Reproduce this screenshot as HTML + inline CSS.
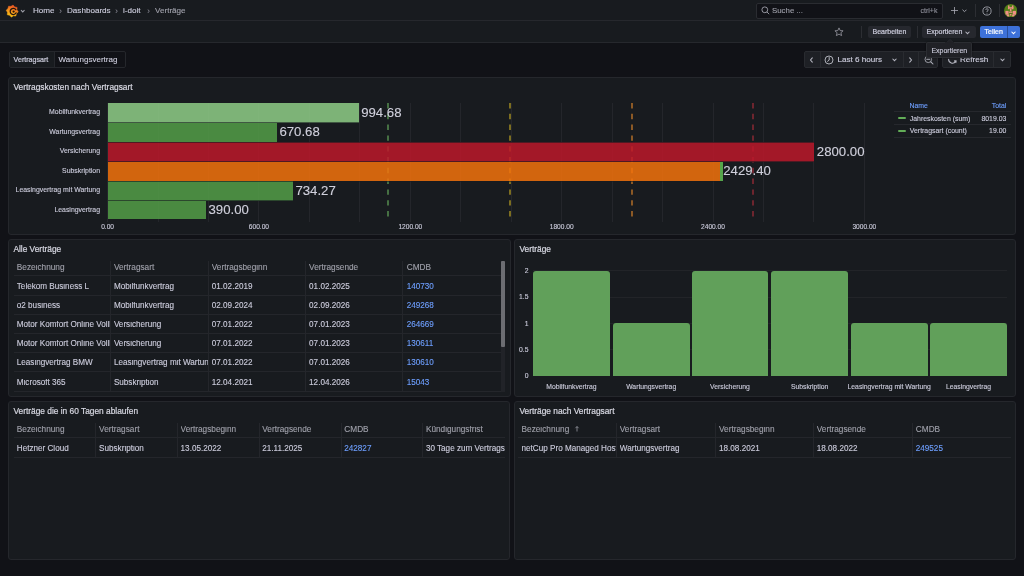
<!DOCTYPE html>
<html><head><meta charset="utf-8">
<style>
*{box-sizing:border-box;margin:0;padding:0}
html,body{width:1024px;height:576px;overflow:hidden;background:#111217;font-family:"Liberation Sans",sans-serif;color:#ccccdc}
#root{position:absolute;left:0;top:0;width:1024px;height:576px;will-change:transform}
.a{position:absolute}
.t{position:absolute;white-space:nowrap;line-height:1;-webkit-text-stroke:0.12px currentColor}
.bar1{left:0;top:0;width:1024px;height:21px;background:#181b1f;border-bottom:1px solid #26282d}
.bar2{left:0;top:21px;width:1024px;height:22px;background:#181b1f;border-bottom:1px solid #26282d}
.panel{position:absolute;background:#181b1f;border:1px solid #25272c;border-radius:3px;overflow:hidden}
.ptitle{position:absolute;left:4.4px;top:5.1px;font-size:8.35px;white-space:nowrap;line-height:1;color:#d8d9e3;-webkit-text-stroke:0.2px #d8d9e3}
.btn{position:absolute;border-radius:2px;background:#26282e;font-size:7px;white-space:nowrap;line-height:1}
.crumb{-webkit-text-stroke:0.12px currentColor;position:absolute;top:6.7px;font-size:8.1px;line-height:1;white-space:nowrap;color:#ccccdc}
.chev{position:absolute;top:6.5px;font-size:9px;line-height:1;color:#8e8e99}
</style></head>
<body><div id="root">
<!-- top nav -->
<div class="a bar1"></div>
<div class="a bar2"></div>

<!-- grafana logo -->
<svg class="a" style="left:5px;top:3.5px" width="14" height="14" viewBox="0 0 14 14">
  <defs><linearGradient id="lg" x1="0" y1="1" x2="0.3" y2="0"><stop offset="0" stop-color="#f9c80e"/><stop offset="0.45" stop-color="#f6a31a"/><stop offset="1" stop-color="#ef5a24"/></linearGradient></defs>
  <polygon fill="url(#lg)" stroke="url(#lg)" stroke-width="0.5" stroke-linejoin="round" points="8.05,1.06 9.69,2.88 12.07,3.43 11.94,5.87 13.24,7.95 11.42,9.59 10.87,11.97 8.43,11.84 6.35,13.14 4.71,11.32 2.33,10.77 2.46,8.33 1.16,6.25 2.98,4.61 3.53,2.23 5.97,2.36"/>
  <path d="M10.84,5.72 A3.1,3.1 0 1 0 11.11,8.81" fill="none" stroke="#24160e" stroke-width="1.25" stroke-linecap="round"/>
  <circle cx="8.60" cy="7.60" r="1.15" fill="#24160e"/>
</svg>
<svg class="a" style="left:20px;top:8.5px" width="5.5" height="4.5" viewBox="0 0 5.5 4.5"><path d="M1,1.2 L2.75,3 L4.5,1.2" fill="none" stroke="#9d9ea8" stroke-width="1.1"/></svg>

<div class="crumb" style="left:33px">Home</div>
<div class="chev" style="left:59px">›</div>
<div class="crumb" style="left:67px">Dashboards</div>
<div class="chev" style="left:115px">›</div>
<div class="crumb" style="left:123px">i-doit</div>
<div class="chev" style="left:147px">›</div>
<div class="crumb" style="left:155px;color:#a0a1ab">Verträge</div>

<!-- search -->
<div class="a" style="left:756px;top:2.5px;width:187px;height:16px;background:#111217;border:1px solid #2a2c31;border-radius:2px"></div>
<svg class="a" style="left:760.5px;top:6px" width="9" height="9" viewBox="0 0 9 9"><circle cx="3.8" cy="3.8" r="2.9" fill="none" stroke="#a0a1ab" stroke-width="0.9"/><path d="M6,6 L8.2,8.2" stroke="#a0a1ab" stroke-width="0.9"/></svg>
<div class="t" style="left:772px;top:6.5px;font-size:7.85px;color:#9d9ea8">Suche ...</div>
<div class="t" style="left:920.5px;top:6.9px;font-size:7px;color:#8e8f99">ctrl+k</div>
<svg class="a" style="left:950px;top:6px" width="9" height="9" viewBox="0 0 9 9"><path d="M4.5,1 V8 M1,4.5 H8" stroke="#a9aab4" stroke-width="0.8"/></svg>
<svg class="a" style="left:962px;top:9px" width="5" height="4" viewBox="0 0 5 4"><path d="M0.8,1 L2.5,2.7 L4.2,1" fill="none" stroke="#9d9ea8" stroke-width="1" stroke-linecap="round"/></svg>
<div class="a" style="left:974.6px;top:4px;width:1px;height:12.5px;background:#2c2e33"></div>
<svg class="a" style="left:982px;top:5.5px" width="10" height="10" viewBox="0 0 10 10"><circle cx="5" cy="5" r="4.1" fill="none" stroke="#a5a6b0" stroke-width="0.85"/><path d="M3.8,4 A1.2,1.2 0 1 1 5,5.1 V6.1" fill="none" stroke="#a5a6b0" stroke-width="0.8"/><circle cx="5" cy="7.3" r="0.45" fill="#a5a6b0"/></svg>
<div class="a" style="left:999px;top:4px;width:1px;height:12.5px;background:#2c2e33"></div>
<svg class="a" style="left:1003.8px;top:3.8px" width="13.4" height="13.4" viewBox="0 0 14 14">
  <defs><clipPath id="avc"><circle cx="7" cy="7" r="7"/></clipPath></defs>
  <g clip-path="url(#avc)"><rect width="14" height="14" fill="#537f17"/>
  <g fill="#ef8f85">
   <rect x="4.2" y="1.5" width="1.5" height="4"/><rect x="8.3" y="1.5" width="1.5" height="4"/><rect x="4.2" y="3.3" width="5.6" height="1.4"/>
   <rect x="6.2" y="4.7" width="1.6" height="3"/>
   <rect x="1.5" y="7.2" width="3.3" height="4"/><rect x="9.2" y="7.2" width="3.3" height="4"/><rect x="5.2" y="8" width="3.6" height="1.2"/>
   <rect x="3" y="11" width="2.5" height="2"/><rect x="8.5" y="11" width="2.5" height="2"/><rect x="6.2" y="10.5" width="1.6" height="1.6"/>
  </g></g>
</svg>

<!-- second bar -->
<svg class="a" style="left:834px;top:26.6px" width="10" height="10" viewBox="0 0 10 10"><path d="M5,0.9 L6.2,3.6 L9.1,3.8 L6.9,5.7 L7.6,8.6 L5,7.1 L2.4,8.6 L3.1,5.7 L0.9,3.8 L3.8,3.6 Z" fill="none" stroke="#9a9ba5" stroke-width="0.8" stroke-linejoin="round"/></svg>
<div class="a" style="left:861px;top:26px;width:1px;height:12px;background:#2c2e33"></div>
<div class="btn" style="left:868px;top:25.7px;width:43px;height:12.6px"></div>
<div class="t" style="left:872.5px;top:28.1px;font-size:7px;color:#ccccdc;-webkit-text-stroke:0.2px #ccccdc">Bearbeiten</div>
<div class="a" style="left:917px;top:26px;width:1px;height:12px;background:#2c2e33"></div>
<div class="btn" style="left:922px;top:25.7px;width:54px;height:12.6px"></div>
<div class="t" style="left:926.5px;top:28.1px;font-size:7px;color:#ccccdc;-webkit-text-stroke:0.2px #ccccdc">Exportieren</div>
<svg class="a" style="left:965px;top:30.5px" width="5" height="4" viewBox="0 0 5 4"><path d="M0.8,1 L2.5,2.7 L4.2,1" fill="none" stroke="#b5b6c0" stroke-width="1.05" stroke-linecap="round"/></svg>
<div class="a" style="left:980px;top:25.7px;width:40px;height:12.6px;background:#3d71d9;border-radius:2px"></div>
<div class="a" style="left:1007px;top:25.7px;width:1px;height:12.6px;background:#2a4f9a"></div>
<div class="t" style="left:984.5px;top:28.1px;font-size:7px;color:#ffffff;-webkit-text-stroke:0.2px #fff">Teilen</div>
<svg class="a" style="left:1011px;top:30.5px" width="5" height="4" viewBox="0 0 5 4"><path d="M0.8,1 L2.5,2.7 L4.2,1" fill="none" stroke="#ffffff" stroke-width="1.05" stroke-linecap="round"/></svg>

<!-- variable -->
<div class="a" style="left:9px;top:51px;width:117px;height:17px;border:1px solid #25272c;border-radius:2px;background:#111217"></div>
<div class="a" style="left:10px;top:52px;width:45px;height:15px;background:#181b1f;border-right:1px solid #25272c"></div>
<div class="t" style="left:13.6px;top:56.6px;font-size:7.1px;color:#ccccdc;-webkit-text-stroke:0.2px #ccccdc">Vertragsart</div>
<div class="t" style="left:58.5px;top:55.5px;font-size:8.0px;color:#ccccdc">Wartungsvertrag</div>

<!-- time picker -->
<div class="a" style="left:804px;top:51px;width:134px;height:17px;background:#1e2025;border:1px solid #292b30;border-radius:2px"></div>
<div class="a" style="left:819.5px;top:51px;width:1px;height:17px;background:#292b30"></div>
<div class="a" style="left:902.8px;top:51px;width:1px;height:17px;background:#292b30"></div>
<div class="a" style="left:917.7px;top:51px;width:1px;height:17px;background:#292b30"></div>
<svg class="a" style="left:809px;top:57px" width="5" height="6" viewBox="0 0 5 6"><path d="M3.3,0.8 L1.5,3 L3.3,5.2" fill="none" stroke="#b5b6c0" stroke-width="1.05" stroke-linecap="round"/></svg>
<svg class="a" style="left:824px;top:55px" width="10" height="10" viewBox="0 0 10 10"><circle cx="5" cy="5" r="4" fill="none" stroke="#c5c6d0" stroke-width="0.85"/><path d="M5.2,2.5 V5.1 L3.6,6.3" fill="none" stroke="#c5c6d0" stroke-width="0.9" stroke-linecap="round"/></svg>
<div class="t" style="left:837.5px;top:56.2px;font-size:8.1px;color:#ccccdc;-webkit-text-stroke:0.15px #ccccdc">Last 6 hours</div>
<svg class="a" style="left:891.5px;top:58px" width="5" height="4" viewBox="0 0 5 4"><path d="M0.8,1 L2.5,2.7 L4.2,1" fill="none" stroke="#b5b6c0" stroke-width="1.05" stroke-linecap="round"/></svg>
<svg class="a" style="left:908.3px;top:57px" width="5" height="6" viewBox="0 0 5 6"><path d="M1.7,0.8 L3.5,3 L1.7,5.2" fill="none" stroke="#b5b6c0" stroke-width="1.05" stroke-linecap="round"/></svg>
<svg class="a" style="left:923.5px;top:55px" width="10" height="10" viewBox="0 0 10 10"><circle cx="4.3" cy="4.3" r="3.3" fill="none" stroke="#b5b6c0" stroke-width="0.8"/><path d="M2.8,4.3 H5.8 M6.8,6.8 L9,9" stroke="#b5b6c0" stroke-width="1.05" stroke-linecap="round"/></svg>
<div class="a" style="left:942px;top:51px;width:69px;height:17px;background:#1e2025;border:1px solid #292b30;border-radius:2px"></div>
<div class="a" style="left:993px;top:51px;width:1px;height:17px;background:#292b30"></div>
<svg class="a" style="left:946.5px;top:55px" width="11" height="10" viewBox="0 0 11 10"><path d="M1.6,4.2 A3.9,3.9 0 0 0 8.6,6.6" fill="none" stroke="#b5b6c0" stroke-width="1.05" stroke-linecap="round"/><path d="M7,5.8 L9.3,5.6 L9.1,7.8 Z" fill="#b5b6c0" stroke="#b5b6c0" stroke-width="0.6" stroke-linejoin="round"/><path d="M2.3,2.2 A3.9,3.9 0 0 1 8.6,2.4" fill="none" stroke="#b5b6c0" stroke-width="0.9" stroke-linecap="round"/></svg>
<div class="t" style="left:960px;top:56.2px;font-size:8.1px;color:#ccccdc;-webkit-text-stroke:0.15px #ccccdc">Refresh</div>
<svg class="a" style="left:1000px;top:58px" width="5" height="4" viewBox="0 0 5 4"><path d="M0.8,1 L2.5,2.7 L4.2,1" fill="none" stroke="#b5b6c0" stroke-width="1.05" stroke-linecap="round"/></svg>

<!-- tooltip -->
<div class="a" style="left:926.4px;top:42px;width:45.4px;height:15.7px;background:#202126;border:1px solid #2b2d32;border-radius:2px;box-shadow:0 0 2px rgba(0,0,0,0.5)"></div>
<svg class="a" style="left:945.6px;top:38.8px" width="8" height="4.2" viewBox="0 0 8 4.2"><path d="M0,4.2 L4,0.4 L8,4.2" fill="#202126" stroke="#2b2d32" stroke-width="0.8"/></svg>
<div class="a" style="left:945.2px;top:42.3px;width:8.8px;height:1.2px;background:#202126"></div>
<div class="t" style="left:931.4px;top:46.6px;font-size:7px;color:#ccccdc">Exportieren</div>
<!-- panels -->
<div class="panel" style="left:8px;top:77px;width:1008px;height:158px"><div class="ptitle">Vertragskosten nach Vertragsart</div></div>
<div class="panel" style="left:8px;top:239px;width:502.5px;height:158px"><div class="ptitle">Alle Verträge</div></div>
<div class="panel" style="left:514px;top:239px;width:502px;height:158px"><div class="ptitle">Verträge</div></div>
<div class="panel" style="left:8px;top:401px;width:501.9px;height:158.5px"><div class="ptitle">Verträge die in 60 Tagen ablaufen</div></div>
<div class="panel" style="left:514px;top:401px;width:502px;height:158.5px"><div class="ptitle">Verträge nach Vertragsart</div></div>
<div class="a" style="left:107.10px;top:103px;width:1px;height:118.5px;background:#24262b"></div>
<div class="a" style="left:157.55px;top:103px;width:1px;height:118.5px;background:#24262b"></div>
<div class="a" style="left:208.00px;top:103px;width:1px;height:118.5px;background:#24262b"></div>
<div class="a" style="left:258.45px;top:103px;width:1px;height:118.5px;background:#24262b"></div>
<div class="a" style="left:308.90px;top:103px;width:1px;height:118.5px;background:#24262b"></div>
<div class="a" style="left:359.35px;top:103px;width:1px;height:118.5px;background:#24262b"></div>
<div class="a" style="left:409.80px;top:103px;width:1px;height:118.5px;background:#24262b"></div>
<div class="a" style="left:460.25px;top:103px;width:1px;height:118.5px;background:#24262b"></div>
<div class="a" style="left:510.70px;top:103px;width:1px;height:118.5px;background:#24262b"></div>
<div class="a" style="left:561.15px;top:103px;width:1px;height:118.5px;background:#24262b"></div>
<div class="a" style="left:611.60px;top:103px;width:1px;height:118.5px;background:#24262b"></div>
<div class="a" style="left:662.05px;top:103px;width:1px;height:118.5px;background:#24262b"></div>
<div class="a" style="left:712.50px;top:103px;width:1px;height:118.5px;background:#24262b"></div>
<div class="a" style="left:762.95px;top:103px;width:1px;height:118.5px;background:#24262b"></div>
<div class="a" style="left:813.40px;top:103px;width:1px;height:118.5px;background:#24262b"></div>
<div class="a" style="left:863.85px;top:103px;width:1px;height:118.5px;background:#24262b"></div>
<svg class="a" style="left:387.2px;top:103px" width="2" height="114"><line x1="1" y1="0" x2="1" y2="114" stroke="#5f9e58" stroke-width="1.3" stroke-dasharray="5.4 5.4"/></svg>
<svg class="a" style="left:509px;top:103px" width="2" height="114"><line x1="1" y1="0" x2="1" y2="114" stroke="#b39b22" stroke-width="1.3" stroke-dasharray="5.4 5.4"/></svg>
<svg class="a" style="left:630.6px;top:103px" width="2" height="114"><line x1="1" y1="0" x2="1" y2="114" stroke="#c87a2a" stroke-width="1.3" stroke-dasharray="5.4 5.4"/></svg>
<svg class="a" style="left:751.6px;top:103px" width="2" height="114"><line x1="1" y1="0" x2="1" y2="114" stroke="#9c2b38" stroke-width="1.3" stroke-dasharray="5.4 5.4"/></svg>
<div class="a" style="left:107.6px;top:103.10px;width:251.06px;height:19.5px;background:rgba(143,206,135,0.85)"></div>
<div class="t" style="right:924px;top:109.05px;font-size:6.9px;color:#ccccdc;text-align:right">Mobilfunkvertrag</div>
<div class="t" style="left:361.16px;top:105.75px;font-size:13.2px;color:#d0d0dc">994.68</div>
<div class="a" style="left:107.6px;top:122.60px;width:169.28px;height:19.5px;background:rgba(83,158,72,0.85)"></div>
<div class="t" style="right:924px;top:128.55px;font-size:6.9px;color:#ccccdc;text-align:right">Wartungsvertrag</div>
<div class="t" style="left:279.38px;top:125.25px;font-size:13.2px;color:#d0d0dc">670.68</div>
<div class="a" style="left:107.6px;top:142.10px;width:706.72px;height:19.5px;background:rgba(188,23,42,0.85)"></div>
<div class="t" style="right:924px;top:148.05px;font-size:6.9px;color:#ccccdc;text-align:right">Versicherung</div>
<div class="t" style="left:816.82px;top:144.75px;font-size:13.2px;color:#d0d0dc">2800.00</div>
<div class="a" style="left:107.6px;top:161.60px;width:613.18px;height:19.5px;background:rgba(243,114,12,0.85)"></div>
<div class="t" style="right:924px;top:167.55px;font-size:6.9px;color:#ccccdc;text-align:right">Subskription</div>
<div class="t" style="left:723.28px;top:164.25px;font-size:13.2px;color:#d0d0dc">2429.40</div>
<div class="a" style="left:107.6px;top:181.10px;width:185.33px;height:19.5px;background:rgba(83,158,72,0.85)"></div>
<div class="t" style="right:924px;top:187.05px;font-size:6.9px;color:#ccccdc;text-align:right">Leasingvertrag mit Wartung</div>
<div class="t" style="left:295.43px;top:183.75px;font-size:13.2px;color:#d0d0dc">734.27</div>
<div class="a" style="left:107.6px;top:200.60px;width:98.44px;height:18.9px;background:rgba(83,158,72,0.85)"></div>
<div class="t" style="right:924px;top:206.55px;font-size:6.9px;color:#ccccdc;text-align:right">Leasingvertrag</div>
<div class="t" style="left:208.54px;top:203.25px;font-size:13.2px;color:#d0d0dc">390.00</div>
<div class="a" style="left:107.6px;top:122.10px;width:251.06px;height:1px;background:rgba(24,27,31,0.6)"></div>
<div class="a" style="left:107.6px;top:141.60px;width:706.72px;height:1px;background:rgba(24,27,31,0.6)"></div>
<div class="a" style="left:107.6px;top:161.10px;width:706.72px;height:1px;background:rgba(24,27,31,0.6)"></div>
<div class="a" style="left:107.6px;top:180.60px;width:613.18px;height:1px;background:rgba(24,27,31,0.6)"></div>
<div class="a" style="left:107.6px;top:200.10px;width:185.33px;height:1px;background:rgba(24,27,31,0.6)"></div>
<div class="a" style="left:720.2px;top:161.60px;width:2.8px;height:19.3px;background:#56a64b"></div>
<div class="t" style="left:77.60px;width:60px;text-align:center;top:223.5px;font-size:6.6px;color:#ccccdc">0.00</div>
<div class="t" style="left:228.95px;width:60px;text-align:center;top:223.5px;font-size:6.6px;color:#ccccdc">600.00</div>
<div class="t" style="left:380.30px;width:60px;text-align:center;top:223.5px;font-size:6.6px;color:#ccccdc">1200.00</div>
<div class="t" style="left:531.65px;width:60px;text-align:center;top:223.5px;font-size:6.6px;color:#ccccdc">1800.00</div>
<div class="t" style="left:683.00px;width:60px;text-align:center;top:223.5px;font-size:6.6px;color:#ccccdc">2400.00</div>
<div class="t" style="left:834.35px;width:60px;text-align:center;top:223.5px;font-size:6.6px;color:#ccccdc">3000.00</div>
<div class="t" style="left:909.5px;top:102.6px;font-size:6.9px;color:#6e9fff">Name</div>
<div class="t" style="right:17.7px;top:102.6px;font-size:6.9px;color:#6e9fff;text-align:right">Total</div>
<div class="a" style="left:894px;top:110.9px;width:117px;height:1px;background:#26282d"></div>
<div class="a" style="left:894px;top:123.7px;width:117px;height:1px;background:#26282d"></div>
<div class="a" style="left:894px;top:137.0px;width:117px;height:1px;background:#26282d"></div>
<div class="a" style="left:898px;top:117.40px;width:7.6px;height:1.6px;border-radius:1px;background:#62ad57"></div>
<div class="t" style="left:909.8px;top:115.50px;font-size:6.9px;color:#ccccdc">Jahreskosten (sum)</div>
<div class="t" style="right:17.7px;top:115.50px;font-size:6.9px;color:#ccccdc;text-align:right">8019.03</div>
<div class="a" style="left:898px;top:130.30px;width:7.6px;height:1.6px;border-radius:1px;background:#62ad57"></div>
<div class="t" style="left:909.8px;top:128.40px;font-size:6.9px;color:#ccccdc">Vertragsart (count)</div>
<div class="t" style="right:17.7px;top:128.40px;font-size:6.9px;color:#ccccdc;text-align:right">19.00</div>
<div class="a" style="left:109.60px;top:261px;width:1px;height:130.00px;background:#24262b"></div>
<div class="a" style="left:207.50px;top:261px;width:1px;height:130.00px;background:#24262b"></div>
<div class="a" style="left:304.80px;top:261px;width:1px;height:130.00px;background:#24262b"></div>
<div class="a" style="left:402.40px;top:261px;width:1px;height:130.00px;background:#24262b"></div>
<div class="a" style="left:13.5px;top:275.10px;width:487.00px;height:1px;background:#24262b"></div>
<div class="a" style="left:13.5px;top:294.90px;width:487.00px;height:1px;background:#24262b"></div>
<div class="a" style="left:13.5px;top:313.80px;width:487.00px;height:1px;background:#24262b"></div>
<div class="a" style="left:13.5px;top:332.80px;width:487.00px;height:1px;background:#24262b"></div>
<div class="a" style="left:13.5px;top:351.90px;width:487.00px;height:1px;background:#24262b"></div>
<div class="a" style="left:13.5px;top:371.10px;width:487.00px;height:1px;background:#24262b"></div>
<div class="a" style="left:13.5px;top:390.50px;width:487.00px;height:1px;background:#24262b"></div>
<div class="t" style="left:16.80px;top:264.30px;width:93.30px;overflow:hidden;font-size:8.25px;color:#9fa0aa">Bezeichnung</div>
<div class="t" style="left:113.90px;top:264.30px;width:94.10px;overflow:hidden;font-size:8.25px;color:#9fa0aa">Vertragsart</div>
<div class="t" style="left:211.80px;top:264.30px;width:93.50px;overflow:hidden;font-size:8.25px;color:#9fa0aa">Vertragsbeginn</div>
<div class="t" style="left:309.10px;top:264.30px;width:93.80px;overflow:hidden;font-size:8.25px;color:#9fa0aa">Vertragsende</div>
<div class="t" style="left:406.70px;top:264.30px;width:93.80px;overflow:hidden;font-size:8.25px;color:#9fa0aa">CMDB</div>
<div class="t" style="left:16.80px;top:282.80px;width:93.30px;overflow:hidden;font-size:8.15px;color:#ccccdc">Telekom Business L</div>
<div class="t" style="left:113.90px;top:282.80px;width:94.10px;overflow:hidden;font-size:8.15px;color:#ccccdc">Mobilfunkvertrag</div>
<div class="t" style="left:211.80px;top:282.80px;width:93.50px;overflow:hidden;font-size:8.15px;color:#ccccdc">01.02.2019</div>
<div class="t" style="left:309.10px;top:282.80px;width:93.80px;overflow:hidden;font-size:8.15px;color:#ccccdc">01.02.2025</div>
<div class="t" style="left:406.70px;top:282.80px;width:93.80px;overflow:hidden;font-size:8.15px;color:#6e9fff">140730</div>
<div class="t" style="left:16.80px;top:302.15px;width:93.30px;overflow:hidden;font-size:8.15px;color:#ccccdc">o2 business</div>
<div class="t" style="left:113.90px;top:302.15px;width:94.10px;overflow:hidden;font-size:8.15px;color:#ccccdc">Mobilfunkvertrag</div>
<div class="t" style="left:211.80px;top:302.15px;width:93.50px;overflow:hidden;font-size:8.15px;color:#ccccdc">02.09.2024</div>
<div class="t" style="left:309.10px;top:302.15px;width:93.80px;overflow:hidden;font-size:8.15px;color:#ccccdc">02.09.2026</div>
<div class="t" style="left:406.70px;top:302.15px;width:93.80px;overflow:hidden;font-size:8.15px;color:#6e9fff">249268</div>
<div class="t" style="left:16.80px;top:321.10px;width:93.30px;overflow:hidden;font-size:8.15px;color:#ccccdc">Motor Komfort Online Vollkasko</div>
<div class="t" style="left:113.90px;top:321.10px;width:94.10px;overflow:hidden;font-size:8.15px;color:#ccccdc">Versicherung</div>
<div class="t" style="left:211.80px;top:321.10px;width:93.50px;overflow:hidden;font-size:8.15px;color:#ccccdc">07.01.2022</div>
<div class="t" style="left:309.10px;top:321.10px;width:93.80px;overflow:hidden;font-size:8.15px;color:#ccccdc">07.01.2023</div>
<div class="t" style="left:406.70px;top:321.10px;width:93.80px;overflow:hidden;font-size:8.15px;color:#6e9fff">264669</div>
<div class="t" style="left:16.80px;top:340.15px;width:93.30px;overflow:hidden;font-size:8.15px;color:#ccccdc">Motor Komfort Online Vollkasko</div>
<div class="t" style="left:113.90px;top:340.15px;width:94.10px;overflow:hidden;font-size:8.15px;color:#ccccdc">Versicherung</div>
<div class="t" style="left:211.80px;top:340.15px;width:93.50px;overflow:hidden;font-size:8.15px;color:#ccccdc">07.01.2022</div>
<div class="t" style="left:309.10px;top:340.15px;width:93.80px;overflow:hidden;font-size:8.15px;color:#ccccdc">07.01.2023</div>
<div class="t" style="left:406.70px;top:340.15px;width:93.80px;overflow:hidden;font-size:8.15px;color:#6e9fff">130611</div>
<div class="t" style="left:16.80px;top:359.30px;width:93.30px;overflow:hidden;font-size:8.15px;color:#ccccdc">Leasingvertrag BMW</div>
<div class="t" style="left:113.90px;top:359.30px;width:94.10px;overflow:hidden;font-size:8.15px;color:#ccccdc">Leasingvertrag mit Wartung</div>
<div class="t" style="left:211.80px;top:359.30px;width:93.50px;overflow:hidden;font-size:8.15px;color:#ccccdc">07.01.2022</div>
<div class="t" style="left:309.10px;top:359.30px;width:93.80px;overflow:hidden;font-size:8.15px;color:#ccccdc">07.01.2026</div>
<div class="t" style="left:406.70px;top:359.30px;width:93.80px;overflow:hidden;font-size:8.15px;color:#6e9fff">130610</div>
<div class="t" style="left:16.80px;top:378.60px;width:93.30px;overflow:hidden;font-size:8.15px;color:#ccccdc">Microsoft 365</div>
<div class="t" style="left:113.90px;top:378.60px;width:94.10px;overflow:hidden;font-size:8.15px;color:#ccccdc">Subskription</div>
<div class="t" style="left:211.80px;top:378.60px;width:93.50px;overflow:hidden;font-size:8.15px;color:#ccccdc">12.04.2021</div>
<div class="t" style="left:309.10px;top:378.60px;width:93.80px;overflow:hidden;font-size:8.15px;color:#ccccdc">12.04.2026</div>
<div class="t" style="left:406.70px;top:378.60px;width:93.80px;overflow:hidden;font-size:8.15px;color:#6e9fff">15043</div>
<div class="a" style="left:500.6px;top:261px;width:4.6px;height:131.3px;background:#212328"></div>
<div class="a" style="left:500.8px;top:261.3px;width:4.2px;height:85.7px;background:#6c6d72;border-radius:1px"></div>
<div class="a" style="left:533px;top:270.25px;width:473.5px;height:1px;background:#222428"></div>
<div class="a" style="left:533px;top:296.5px;width:473.5px;height:1px;background:#222428"></div>
<div class="a" style="left:533px;top:322.75px;width:473.5px;height:1px;background:#222428"></div>
<div class="a" style="left:533px;top:349.0px;width:473.5px;height:1px;background:#222428"></div>
<div class="t" style="right:495.5px;top:268.15px;font-size:6.8px;color:#ccccdc;text-align:right">2</div>
<div class="t" style="right:495.5px;top:294.4px;font-size:6.8px;color:#ccccdc;text-align:right">1.5</div>
<div class="t" style="right:495.5px;top:320.65px;font-size:6.8px;color:#ccccdc;text-align:right">1</div>
<div class="t" style="right:495.5px;top:346.9px;font-size:6.8px;color:#ccccdc;text-align:right">0.5</div>
<div class="t" style="right:495.5px;top:373.15px;font-size:6.8px;color:#ccccdc;text-align:right">0</div>
<div class="a" style="left:533.25px;top:270.70px;width:76.5px;height:105.50px;background:#61a05a;border-radius:3px 3px 0 0"></div>
<div class="t" style="left:521.45px;width:100px;text-align:center;top:384.15px;font-size:6.8px;color:#ccccdc">Mobilfunkvertrag</div>
<div class="a" style="left:613.00px;top:323.45px;width:76.5px;height:52.75px;background:#61a05a;border-radius:3px 3px 0 0"></div>
<div class="t" style="left:601.20px;width:100px;text-align:center;top:384.15px;font-size:6.8px;color:#ccccdc">Wartungsvertrag</div>
<div class="a" style="left:691.75px;top:270.70px;width:76.5px;height:105.50px;background:#61a05a;border-radius:3px 3px 0 0"></div>
<div class="t" style="left:679.95px;width:100px;text-align:center;top:384.15px;font-size:6.8px;color:#ccccdc">Versicherung</div>
<div class="a" style="left:771.40px;top:270.70px;width:76.5px;height:105.50px;background:#61a05a;border-radius:3px 3px 0 0"></div>
<div class="t" style="left:759.60px;width:100px;text-align:center;top:384.15px;font-size:6.8px;color:#ccccdc">Subskription</div>
<div class="a" style="left:851.00px;top:323.45px;width:76.5px;height:52.75px;background:#61a05a;border-radius:3px 3px 0 0"></div>
<div class="t" style="left:839.20px;width:100px;text-align:center;top:384.15px;font-size:6.8px;color:#ccccdc">Leasingvertrag mit Wartung</div>
<div class="a" style="left:930.30px;top:323.45px;width:76.5px;height:52.75px;background:#61a05a;border-radius:3px 3px 0 0"></div>
<div class="t" style="left:918.50px;width:100px;text-align:center;top:384.15px;font-size:6.8px;color:#ccccdc">Leasingvertrag</div>
<div class="a" style="left:95.30px;top:423.25px;width:1px;height:33.85px;background:#24262b"></div>
<div class="a" style="left:176.80px;top:423.25px;width:1px;height:33.85px;background:#24262b"></div>
<div class="a" style="left:258.50px;top:423.25px;width:1px;height:33.85px;background:#24262b"></div>
<div class="a" style="left:340.50px;top:423.25px;width:1px;height:33.85px;background:#24262b"></div>
<div class="a" style="left:422.10px;top:423.25px;width:1px;height:33.85px;background:#24262b"></div>
<div class="a" style="left:13.5px;top:437.30px;width:491.75px;height:1px;background:#24262b"></div>
<div class="a" style="left:13.5px;top:456.60px;width:491.75px;height:1px;background:#24262b"></div>
<div class="t" style="left:16.80px;top:426.12px;width:79.00px;overflow:hidden;font-size:8.25px;color:#9fa0aa">Bezeichnung</div>
<div class="t" style="left:99.10px;top:426.12px;width:78.20px;overflow:hidden;font-size:8.25px;color:#9fa0aa">Vertragsart</div>
<div class="t" style="left:180.60px;top:426.12px;width:78.40px;overflow:hidden;font-size:8.25px;color:#9fa0aa">Vertragsbeginn</div>
<div class="t" style="left:262.30px;top:426.12px;width:78.70px;overflow:hidden;font-size:8.25px;color:#9fa0aa">Vertragsende</div>
<div class="t" style="left:344.30px;top:426.12px;width:78.30px;overflow:hidden;font-size:8.25px;color:#9fa0aa">CMDB</div>
<div class="t" style="left:425.90px;top:426.12px;width:79.35px;overflow:hidden;font-size:8.25px;color:#9fa0aa">Kündigungsfrist</div>
<div class="t" style="left:16.80px;top:444.75px;width:79.00px;overflow:hidden;font-size:8.15px;color:#ccccdc">Hetzner Cloud</div>
<div class="t" style="left:99.10px;top:444.75px;width:78.20px;overflow:hidden;font-size:8.15px;color:#ccccdc">Subskription</div>
<div class="t" style="left:180.60px;top:444.75px;width:78.40px;overflow:hidden;font-size:8.15px;color:#ccccdc">13.05.2022</div>
<div class="t" style="left:262.30px;top:444.75px;width:78.70px;overflow:hidden;font-size:8.15px;color:#ccccdc">21.11.2025</div>
<div class="t" style="left:344.30px;top:444.75px;width:78.30px;overflow:hidden;font-size:8.15px;color:#6e9fff">242827</div>
<div class="t" style="left:425.90px;top:444.75px;width:79.35px;overflow:hidden;font-size:8.15px;color:#ccccdc">30 Tage zum Vertragsende</div>
<div class="a" style="left:616.00px;top:423.25px;width:1px;height:34.05px;background:#24262b"></div>
<div class="a" style="left:715.25px;top:423.25px;width:1px;height:34.05px;background:#24262b"></div>
<div class="a" style="left:813.00px;top:423.25px;width:1px;height:34.05px;background:#24262b"></div>
<div class="a" style="left:912.00px;top:423.25px;width:1px;height:34.05px;background:#24262b"></div>
<div class="a" style="left:518.25px;top:437.30px;width:492.75px;height:1px;background:#24262b"></div>
<div class="a" style="left:518.25px;top:456.80px;width:492.75px;height:1px;background:#24262b"></div>
<div class="t" style="left:521.55px;top:426.12px;width:94.95px;overflow:hidden;font-size:8.25px;color:#9fa0aa">Bezeichnung</div>
<div class="t" style="left:619.80px;top:426.12px;width:95.95px;overflow:hidden;font-size:8.25px;color:#9fa0aa">Vertragsart</div>
<div class="t" style="left:719.05px;top:426.12px;width:94.45px;overflow:hidden;font-size:8.25px;color:#9fa0aa">Vertragsbeginn</div>
<div class="t" style="left:816.80px;top:426.12px;width:95.70px;overflow:hidden;font-size:8.25px;color:#9fa0aa">Vertragsende</div>
<div class="t" style="left:915.80px;top:426.12px;width:95.20px;overflow:hidden;font-size:8.25px;color:#9fa0aa">CMDB</div>
<div class="t" style="left:521.55px;top:444.85px;width:94.95px;overflow:hidden;font-size:8.15px;color:#ccccdc">netCup Pro Managed Hosting</div>
<div class="t" style="left:619.80px;top:444.85px;width:95.95px;overflow:hidden;font-size:8.15px;color:#ccccdc">Wartungsvertrag</div>
<div class="t" style="left:719.05px;top:444.85px;width:94.45px;overflow:hidden;font-size:8.15px;color:#ccccdc">18.08.2021</div>
<div class="t" style="left:816.80px;top:444.85px;width:95.70px;overflow:hidden;font-size:8.15px;color:#ccccdc">18.08.2022</div>
<div class="t" style="left:915.80px;top:444.85px;width:95.20px;overflow:hidden;font-size:8.15px;color:#6e9fff">249525</div>
<svg class="a" style="left:574px;top:425.3px" width="6" height="8" viewBox="0 0 6 8"><path d="M3,6.5 V1.6 M1.4,3.2 L3,1.5 L4.6,3.2" fill="none" stroke="#9fa0aa" stroke-width="0.75"/></svg>
</div></body></html>
